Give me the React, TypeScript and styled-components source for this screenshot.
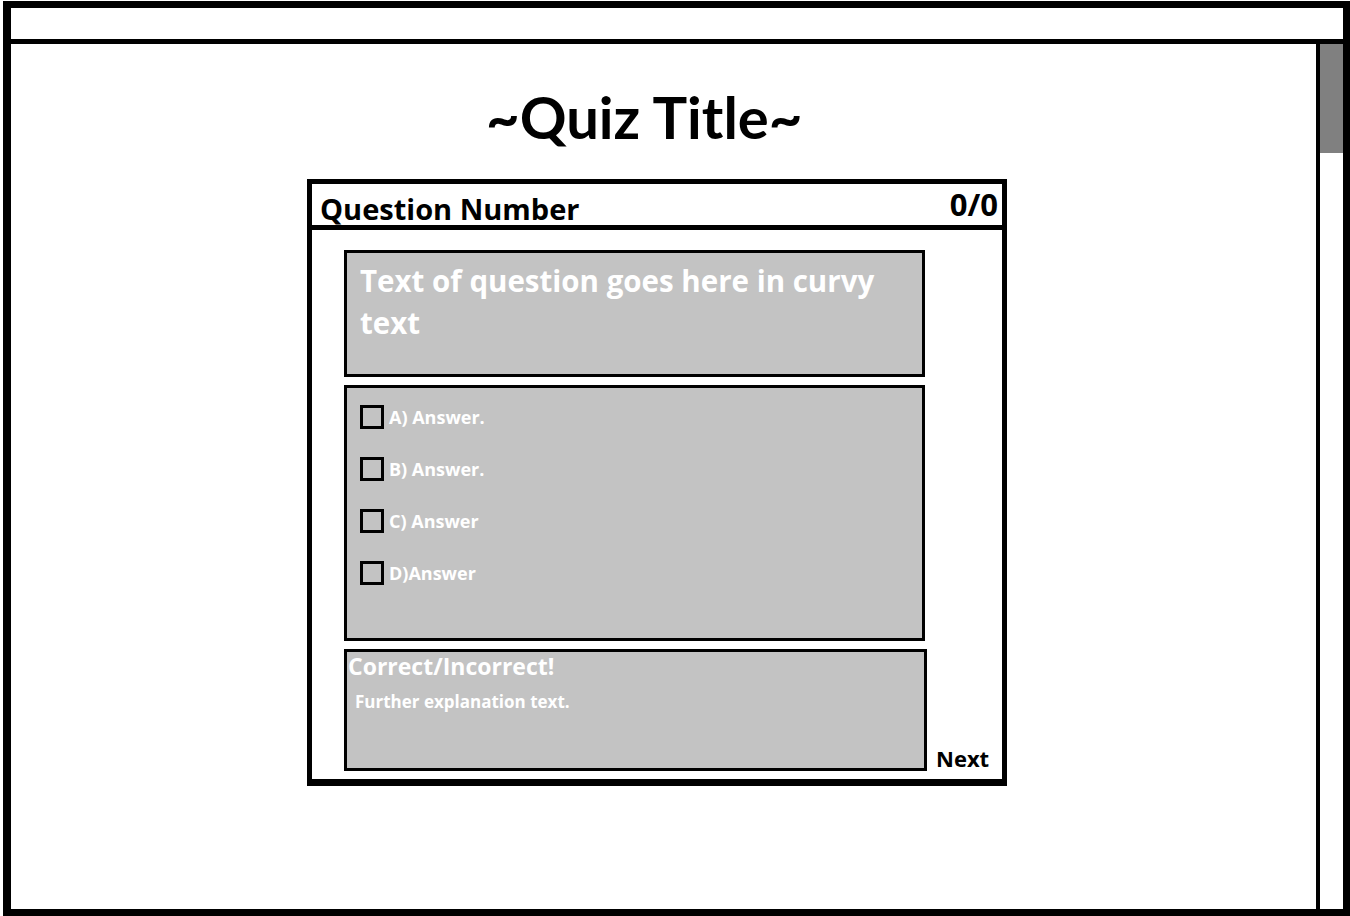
import React from "react";
import styled, { createGlobalStyle } from "styled-components";

const GlobalStyle = createGlobalStyle`
  html, body {
    margin: 0;
    padding: 0;
    background: #ffffff;
    overflow: hidden;
  }
  body {
    font-family: "Open Sans", Lato, sans-serif;
  }
  * { box-sizing: border-box; }
`;

const Frame = styled.div`
  margin: 1px 0 0 3px;
  width: 1347px;
  height: 915px;
  border: 7px solid #000;
  border-left-width: 8px;
  display: flex;
  flex-direction: column;
  background: #fff;
`;

const TopBar = styled.div`
  height: 36px;
  flex-shrink: 0;
  border-bottom: 5px solid #000;
`;

const Body = styled.div`
  flex: 1;
  display: flex;
  min-height: 0;
`;

const Content = styled.main`
  flex: 1;
  display: flex;
  flex-direction: column;
  align-items: flex-start;
`;

const ScrollTrack = styled.div`
  width: 27px;
  flex-shrink: 0;
  border-left: 4px solid #000;
  background: #fff;
`;

const ScrollThumb = styled.div`
  height: 109px;
  background: #808080;
`;

const Title = styled.h1`
  margin: 37px 0 0 475px;
  font-family: Lato, "Open Sans", sans-serif;
  font-size: 58px;
  line-height: 72px;
  font-weight: 700;
  color: #000;
`;

const Card = styled.section`
  margin: 26px 0 0 296px;
  width: 700px;
  height: 607px;
  border: 5px solid #000;
  border-bottom-width: 7px;
  display: flex;
  flex-direction: column;
`;

const CardHeader = styled.header`
  height: 46px;
  flex-shrink: 0;
  border-bottom: 5px solid #000;
  display: flex;
  justify-content: space-between;
  align-items: flex-end;
  padding: 0 4px 0 8px;
`;

const HeaderLabel = styled.span<{ $size: number; $drop: number }>`
  font-size: ${(p) => p.$size}px;
  line-height: 1;
  font-weight: 700;
  color: #000;
  margin-bottom: ${(p) => p.$drop}px;
`;

const CardBody = styled.div`
  flex: 1;
  display: flex;
  padding: 20px 0 8px 32px;
`;

const Column = styled.div`
  display: flex;
  flex-direction: column;
  gap: 8px;
`;

const GreyBox = styled.div<{ $w: number; $h: number }>`
  width: ${(p) => p.$w}px;
  height: ${(p) => p.$h}px;
  border: 3px solid #000;
  background: #c3c3c3;
  color: #fff;
  font-weight: 700;
`;

const QuestionText = styled.p`
  margin: 0;
  padding: 7px 13px 0 13px;
  font-size: 29.5px;
  line-height: 42px;
`;

const AnswerList = styled.ul`
  list-style: none;
  margin: 0;
  padding: 17px 0 0 13px;
  display: flex;
  flex-direction: column;
  gap: 28px;
`;

const AnswerRow = styled.li`
  display: flex;
  align-items: center;
  gap: 5px;
  height: 24px;
  font-size: 18px;
`;

const CheckBox = styled.span`
  width: 24px;
  height: 24px;
  border: 3px solid #000;
  flex-shrink: 0;
`;

const FeedbackTitle = styled.div`
  padding: 0 0 0 1px;
  font-size: 23px;
  line-height: 28px;
`;

const FeedbackText = styled.div`
  padding: 11px 0 0 8px;
  font-size: 17px;
  line-height: 22px;
`;

const NextArea = styled.div`
  flex: 1;
  display: flex;
  align-items: flex-end;
  padding-left: 9px;
`;

const NextButton = styled.span`
  font-size: 22px;
  line-height: 1;
  font-weight: 700;
  color: #000;
  margin-bottom: 2px;
`;

const answers = ["A) Answer.", "B) Answer.", "C) Answer", "D)Answer"];

export default function App() {
  return (
    <>
      <GlobalStyle />
      <Frame>
        <TopBar />
        <Body>
          <Content>
            <Title>~Quiz Title~</Title>
            <Card>
              <CardHeader>
                <HeaderLabel $size={29} $drop={2}>Question Number</HeaderLabel>
                <HeaderLabel $size={31} $drop={5}>0/0</HeaderLabel>
              </CardHeader>
              <CardBody>
                <Column>
                  <GreyBox $w={581} $h={127}>
                    <QuestionText>Text of question goes here in curvy text</QuestionText>
                  </GreyBox>
                  <GreyBox $w={581} $h={256}>
                    <AnswerList>
                      {answers.map((a) => (
                        <AnswerRow key={a}>
                          <CheckBox />
                          {a}
                        </AnswerRow>
                      ))}
                    </AnswerList>
                  </GreyBox>
                  <GreyBox $w={583} $h={122}>
                    <FeedbackTitle>Correct/Incorrect!</FeedbackTitle>
                    <FeedbackText>Further explanation text.</FeedbackText>
                  </GreyBox>
                </Column>
                <NextArea>
                  <NextButton>Next</NextButton>
                </NextArea>
              </CardBody>
            </Card>
          </Content>
          <ScrollTrack>
            <ScrollThumb />
          </ScrollTrack>
        </Body>
      </Frame>
    </>
  );
}
